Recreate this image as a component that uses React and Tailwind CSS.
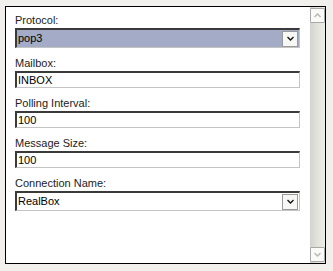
import React from 'react';

const Chevron = ({ up = false, color = '#000', w = 7, h = 4 }) => (
  <svg width={w} height={h + 1} viewBox="0 0 7 5" fill="none">
    <path
      d={up ? 'M0.5 4 L3.5 1 L6.5 4' : 'M0.5 1 L3.5 4 L6.5 1'}
      stroke={color}
      strokeWidth="1.3"
    />
  </svg>
);

const Label = ({ children }) => (
  <div className="h-[18px] pt-[3px] leading-[14px] text-[11px] text-[#222]">{children}</div>
);

const TextField = ({ value }) => (
  <div className="h-[17px] mb-[5px] border-t-2 border-l-2 border-t-[#3a3a3a] border-l-[#3a3a3a] border-r border-b border-r-[#c4c4c4] border-b-[#c4c4c4] bg-white flex items-center pl-[1px] text-[11px] leading-none text-black">
    {value}
  </div>
);

const SelectField = ({ value, active = false }) => (
  <div
    className={`h-[20px] mb-[5px] border-t-2 border-l-2 border-t-[#3a3a3a] border-l-[#3a3a3a] border-r border-b border-r-[#c4c4c4] border-b-[#c4c4c4] flex items-center text-[11px] leading-none text-black ${
      active ? 'bg-[#a3abc7]' : 'bg-white'
    }`}
  >
    <span className="flex-1 pl-[1px]">{value}</span>
    <div className="w-[16px] h-[16px] mr-[1px] border border-[#9a9a9a] bg-[#f7f7f5] flex items-center justify-center">
      <Chevron color="#111" />
    </div>
  </div>
);

const ScrollButton = ({ up }) => (
  <div className="w-[15px] h-[15px] border border-[#a9a9a9] bg-[#fafaf8] rounded-[1px] flex items-center justify-center">
    <Chevron up={up} color="#b4b4b4" />
  </div>
);

export default function App() {
  return (
    <div
      className="w-[333px] h-[271px] bg-[#f1f0ed] pt-[6px] pl-[5px]"
      style={{ fontFamily: '"Liberation Sans", Arial, sans-serif' }}
    >
      <div className="w-[321px] h-[258px] border border-black bg-white flex">
        {/* Form */}
        <div className="flex-1 pl-[9px] pr-[10px] pt-[3px]">
          <Label>Protocol:</Label>
          <SelectField value="pop3" active />
          <Label>Mailbox:</Label>
          <TextField value="INBOX" />
          <Label>Polling Interval:</Label>
          <TextField value="100" />
          <Label>Message Size:</Label>
          <TextField value="100" />
          <Label>Connection Name:</Label>
          <SelectField value="RealBox" />
        </div>

        {/* Scrollbar */}
        <div className="w-[15px] py-[1px] flex flex-col justify-between bg-linear-to-r from-[#d3d3cd] via-[#e3e3dd] to-[#ececE8]">
          <ScrollButton up />
          <ScrollButton />
        </div>
      </div>
    </div>
  );
}
